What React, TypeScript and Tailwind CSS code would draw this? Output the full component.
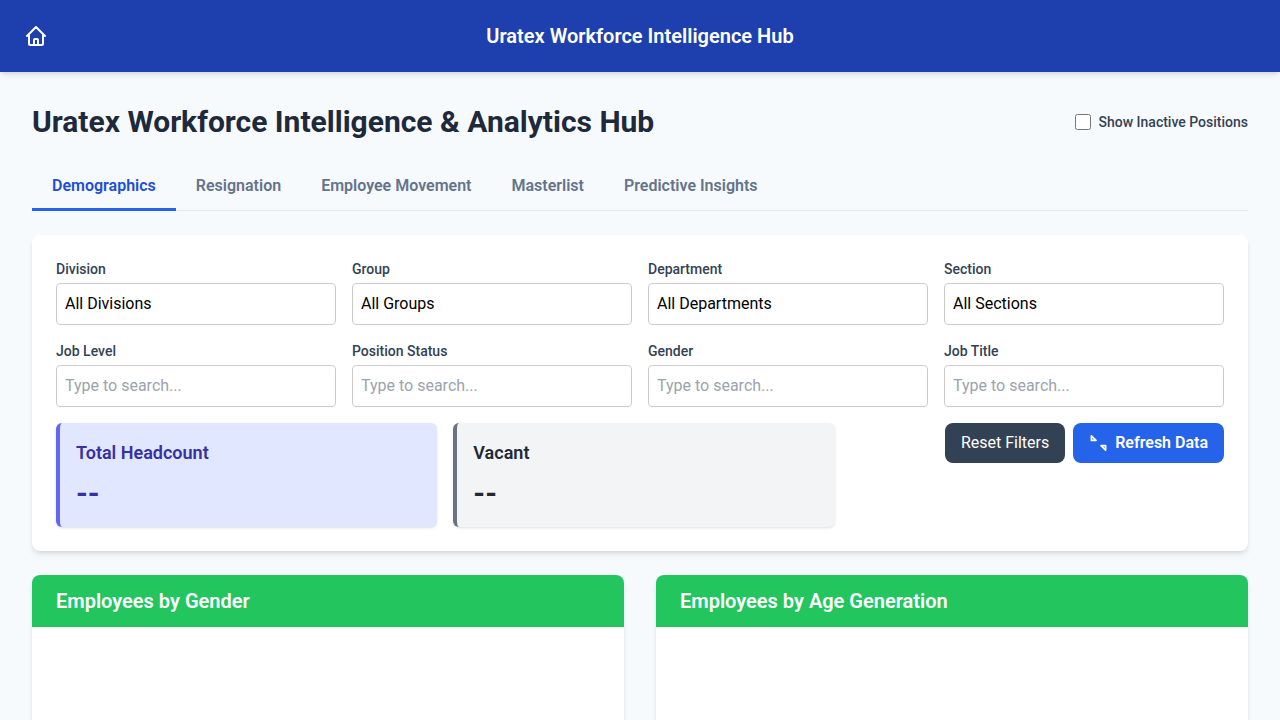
import { useState } from "react";

const tabs = ["Demographics", "Resignation", "Employee Movement", "Masterlist", "Predictive Insights"];

const selects = [
  { id: "division", label: "Division", all: "All Divisions" },
  { id: "group", label: "Group", all: "All Groups" },
  { id: "department", label: "Department", all: "All Departments" },
  { id: "section", label: "Section", all: "All Sections" },
];

const searches = [
  { id: "job-level", label: "Job Level" },
  { id: "position-status", label: "Position Status" },
  { id: "gender", label: "Gender" },
  { id: "job-title", label: "Job Title" },
];

const labelClass = "mb-1 block text-sm font-medium text-[#334155]";
const fieldClass =
  "block w-full appearance-none rounded border border-[#cccccc] bg-white p-2 text-base text-black placeholder:text-[#9ca3af]";

function HomeIcon() {
  return (
    <svg className="size-6" fill="none" viewBox="0 0 24 24" stroke="currentColor" strokeWidth="2" strokeLinecap="round" strokeLinejoin="round" aria-hidden="true">
      <path d="M3 12l2-2m0 0l7-7 7 7M5 10v10a1 1 0 001 1h12a1 1 0 001-1V10M19 10l2 2M9 21a1 1 0 001-1v-4a1 1 0 011-1h2a1 1 0 011 1v4a1 1 0 001 1" />
    </svg>
  );
}

function RefreshIcon() {
  return (
    <svg className="size-5" viewBox="0 0 20 20" fill="none" stroke="currentColor" strokeWidth="1.7" strokeLinejoin="round" aria-hidden="true">
      <path d="M2.4 2.8v4.6h4.6z" />
      <path d="M16.6 17.2v-4.6h-4.6z" />
    </svg>
  );
}

function ChartCard({ title }: { title: string }) {
  return (
    <section className="overflow-hidden rounded-lg bg-white shadow-md">
      <h2 className="bg-[#22c55e] px-6 py-3 text-xl font-semibold text-white">{title}</h2>
      <div className="h-96 p-6" />
    </section>
  );
}

export default function App() {
  const [active, setActive] = useState(tabs[0]);
  const [filters, setFilters] = useState<Record<string, string>>({});
  const [inactive, setInactive] = useState(false);

  return (
    <div className="min-h-screen bg-[#f7fafc] font-['Roboto',sans-serif] text-[#1e293b]">
      <header className="grid grid-cols-[1fr_auto_1fr] items-center bg-[#1e40af] p-4 text-white shadow-md">
        <a href="#home" aria-label="Home" className="justify-self-start rounded-full p-2">
          <HomeIcon />
        </a>
        <div className="text-xl font-semibold">Uratex Workforce Intelligence Hub</div>
      </header>

      <main className="p-8">
        <div className="mb-5 flex items-center justify-between">
          <h1 className="text-3xl font-bold">Uratex Workforce Intelligence &amp; Analytics Hub</h1>
          <label className="flex items-center gap-2 text-sm font-medium text-[#334155]">
            <input type="checkbox" className="size-4" checked={inactive} onChange={(e) => setInactive(e.target.checked)} />
            Show Inactive Positions
          </label>
        </div>

        <nav className="mb-6 flex border-b border-[#e2e8f0]">
          {tabs.map((tab) => (
            <button
              key={tab}
              type="button"
              onClick={() => setActive(tab)}
              className={
                tab === active
                  ? "-mb-px border-b-3 border-[#2563eb] px-5 pt-3.5 pb-2.5 font-semibold text-[#1d4ed8]"
                  : "-mb-px border-b-3 border-transparent px-5 pt-3.5 pb-2.5 font-semibold text-[#64748b]"
              }
            >
              {tab}
            </button>
          ))}
        </nav>

        <section className="mb-6 rounded-lg bg-white p-6 shadow-md">
          <div className="mb-4 grid grid-cols-4 gap-4">
            {selects.map((f) => (
              <div key={f.id}>
                <label htmlFor={f.id} className={labelClass}>{f.label}</label>
                <select id={f.id} className={fieldClass}>
                  <option>{f.all}</option>
                </select>
              </div>
            ))}
            {searches.map((f) => (
              <div key={f.id}>
                <label htmlFor={f.id} className={labelClass}>{f.label}</label>
                <input
                  id={f.id}
                  type="text"
                  placeholder="Type to search..."
                  className={fieldClass}
                  value={filters[f.id] ?? ""}
                  onChange={(e) => setFilters({ ...filters, [f.id]: e.target.value })}
                />
              </div>
            ))}
          </div>

          <div className="flex items-start justify-between">
            <div className="grid w-2/3 grid-cols-2 gap-4">
              <div className="rounded-md border-l-4 border-[#6366f1] bg-[#e0e7ff] p-4 text-[#3730a3] shadow-sm">
                <h3 className="mb-2 text-lg font-semibold">Total Headcount</h3>
                <p className="text-3xl font-bold">--</p>
              </div>
              <div className="rounded-md border-l-4 border-[#6b7280] bg-[#f3f4f6] p-4 text-[#1f2937] shadow-sm">
                <h3 className="mb-2 text-lg font-semibold">Vacant</h3>
                <p className="text-3xl font-bold">--</p>
              </div>
            </div>
            <div className="flex gap-2">
              <button type="button" onClick={() => setFilters({})} className="rounded-lg bg-[#334155] px-4 py-2 text-white">
                Reset Filters
              </button>
              <button type="button" className="flex items-center gap-1.5 rounded-lg bg-[#2563eb] px-4 py-2 font-semibold text-white">
                <RefreshIcon />
                Refresh Data
              </button>
            </div>
          </div>
        </section>

        <div className="grid grid-cols-2 gap-8">
          <ChartCard title="Employees by Gender" />
          <ChartCard title="Employees by Age Generation" />
        </div>
      </main>
    </div>
  );
}
